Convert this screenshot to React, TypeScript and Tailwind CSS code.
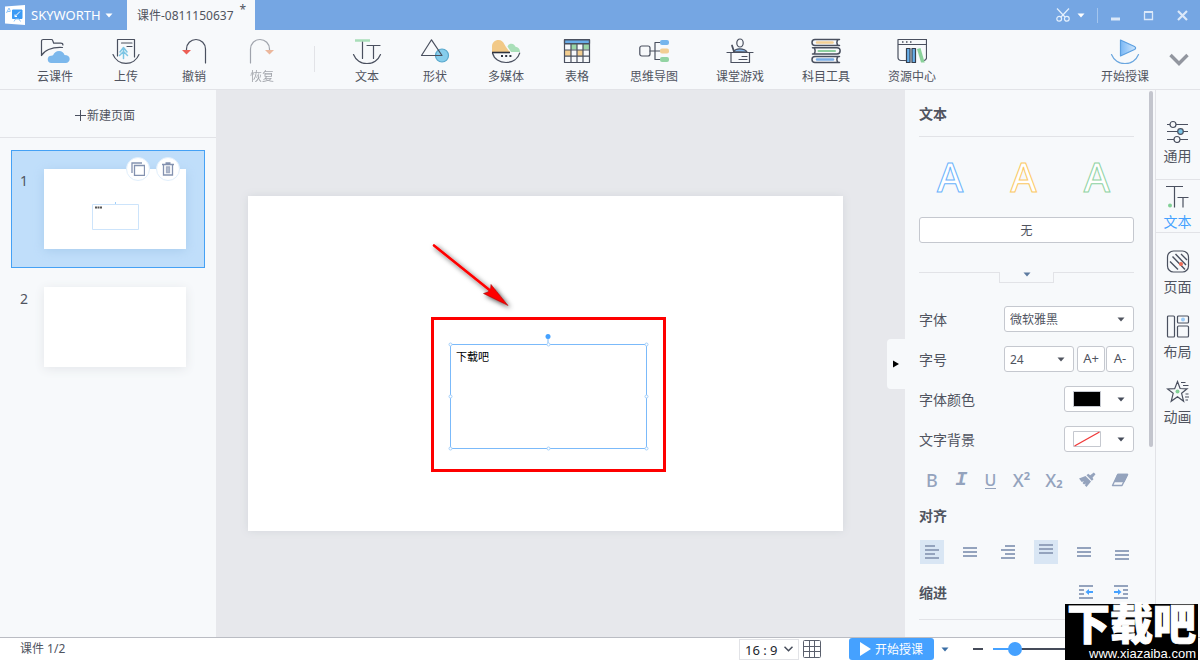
import type { ReactNode } from "react";

const INK = "#4a505f";

function Caret({ className = "text-[#454b59]" }: { className?: string }) {
  return (
    <svg width="8" height="5" viewBox="0 0 8 5" className={`pointer-events-none shrink-0 ${className}`} aria-hidden="true">
      <path d="M0.5 0.500h7L4 4.600z" fill="currentColor" />
    </svg>
  );
}

function ToolIcon({ children }: { children: ReactNode }) {
  return (
    <svg width="30" height="26" viewBox="0 0 30 26" fill="none" stroke={INK} strokeWidth="1.2" strokeLinecap="round" strokeLinejoin="round" aria-hidden="true">
      {children}
    </svg>
  );
}

const cloudIcon = (
  <ToolIcon>
    <path d="M1.500 17.500V3.200c0-1 .7-1.700 1.700-1.700h8.300c.6 0 1 .4 1.200 1l1 2.700h7c1.600 0 2.200.8 2.200 1.800" />
    <path d="M1.500 17.500C4 13 11 8.800 22.500 9.500" />
    <path d="M11.500 25a3.600 3.600 0 0 1-.3-7.200c1-.3 1.600-.4 2-.8.8-2.200 3-4 5.800-4 3 0 5 1.700 5.500 4.100 3 0 5.200 1.600 5.200 4 0 2.400-1.700 3.900-4 3.900z" fill="#7cb8ec" stroke="none" />
  </ToolIcon>
);

const uploadIcon = (
  <ToolIcon>
    <path d="M6.500 18V1.500h17V19" />
    <path d="M2 16.500a14 14 0 0 0 26 0" />
    <path d="M10.500 5h10.500M16 8.500h5" />
    <path d="M12.500 10v10.500M9 14l3.500-4.500L16 14M8.500 17.500l4-4 4 4" stroke="#7cc5e4" strokeWidth="1.500" />
  </ToolIcon>
);

const undoIcon = (
  <ToolIcon>
    <path d="M26.500 25V11a9.500 9.500 0 0 0-19 0v2" />
    <path d="M3 12h9l-4.500 4.500z" fill="#ec5f55" stroke="none" />
  </ToolIcon>
);

const redoIcon = (
  <ToolIcon>
    <path d="M3.500 25V11a9.500 9.500 0 0 1 19 0v2" />
    <path d="M18 12h9l-4.500 4.500z" fill="#e07840" stroke="none" />
  </ToolIcon>
);

const textIcon = (
  <ToolIcon>
    <path d="M3 2.500h15" stroke="#a9deb9" strokeWidth="2.500" strokeLinecap="butt" />
    <path d="M10.500 4v16.500M15 7.500h13M21.500 7.500v13" />
    <path d="M1.500 16.500a14.500 14.500 0 0 0 27 0" />
  </ToolIcon>
);

const shapeIcon = (
  <ToolIcon>
    <circle cx="22" cy="17.500" r="6.500" fill="#86cdec" stroke="#58a8cc" />
    <path d="M11.500 1.800 1.500 17.500h20.500z" />
  </ToolIcon>
);

const mediaIcon = (
  <ToolIcon>
    <path d="M1 14V8.500C1 4.500 4 2 7.500 2c3 0 4.500 1.500 6 4.500 1.500 2.500 3 5 5.500 7.500z" fill="#f2c987" stroke="none" />
    <path d="M16.500 8.500c1-2 2-2.700 4-2.700s3.500 1.500 4 3c2.500.2 4.500 2 4.500 5.200H20z" fill="#a9dfb8" stroke="none" />
    <path d="M1.500 15c1.500 6 7 9.500 13.500 9.500S27 21 28.700 15" />
    <path d="M1 14.500h18" strokeWidth="1.600" stroke="#2f3440" strokeLinecap="butt" />
    <path d="M10 18h2M14.200 18h2M18.400 18h2" strokeWidth="2" strokeLinecap="butt" stroke="#2f3440" />
  </ToolIcon>
);

const tableIcon = (
  <ToolIcon>
    <path d="M2.500 2h25v3.500h-25z" fill="#69ade8" />
    <path d="M9 6h6v5.500H9zM21 6h6v5.500h-6z" fill="#9ad5a6" stroke="none" />
    <path d="M3 12h6v6H3zM15 12h6v6h-6z" fill="#f3ce90" stroke="none" />
    <path d="M2.500 1.500h25v23h-25zM2.500 5.800h25M2.500 12h25M2.500 18.200h25M9 6v18.500M15 6v18.500M21 6v18.500" />
  </ToolIcon>
);

const mindIcon = (
  <ToolIcon>
    <rect x="0.800" y="8" width="10.200" height="10" rx="2" />
    <path d="M11 13h10M21 4.500h-5v17h5" />
    <g stroke="none">
      <rect x="21" y="2" width="9" height="5" rx="2" fill="#76b5ec" />
      <rect x="21" y="10.500" width="9" height="5" rx="2" fill="#f2ce94" />
      <rect x="21" y="19" width="9" height="5" rx="2" fill="#93d4a3" />
    </g>
  </ToolIcon>
);

const gameIcon = (
  <ToolIcon>
    <ellipse cx="15" cy="5" rx="3.200" ry="4" />
    <path d="M8.500 13.500c2-2.500 4-2.700 6-2.700s6 .2 7.500 3.200z" fill="#86b9ec" />
    <path d="M7 7.500 9 13.500" strokeWidth="1.800" />
    <path d="M2 14.500h26M6 15v9.500h18.500V15M17 18.500h5M14 21.500h8" />
  </ToolIcon>
);

const booksIcon = (
  <ToolIcon>
    <path d="M28.500 1.500H4a3 3 0 0 0 0 6h24.500M27 1.500c-1.500 2-1.500 4 0 6M1.500 9.700H26a3 3 0 0 1 0 6.300H1.500M3 9.700c1.500 2.100 1.500 4.200 0 6.300M28.500 18.500H4a3 3 0 0 0 0 6h24.500M27 18.500c-1.500 2-1.500 4 0 6" strokeWidth="1.500" />
    <path d="M6 4.500h15.500" stroke="#f4cf95" strokeWidth="2.500" />
    <path d="M7.500 13h16.500" stroke="#8dd09f" strokeWidth="2" />
    <path d="M6 21.500h16" stroke="#79ade6" strokeWidth="2.500" />
  </ToolIcon>
);

const resourceIcon = (
  <ToolIcon>
    <path d="M8.500 22.500H4a3 3 0 0 1-3-3V1.500h28.500V20a3 3 0 0 1-2.500 2.500M1 6.500h28.500" />
    <path d="M5 4h1.500M9 4h1.500M13 4h1.500" strokeLinecap="butt" strokeWidth="1.500" />
    <path d="M9.500 10.500h3.500v14H9.500zM15 10.500h3.500v14H15z" fill="#67aee9" stroke="#363e4d" />
    <path d="m20 11 3.500-.9 4.200 14.500H24z" fill="#8ad19a" stroke="none" />
  </ToolIcon>
);

const startIcon = (
  <ToolIcon>
    <defs>
      <linearGradient id="play-fill">
        <stop stopColor="#7ab8f5" />
        <stop offset="1" stopColor="#cfe6fc" />
      </linearGradient>
    </defs>
    <path d="M10.500 2v16l14-6.500c1.500-.8 1.500-2.200 0-3z" fill="url(#play-fill)" stroke="#5b9fe0" />
    <path d="M1.500 16.500a14.500 14.500 0 0 0 27 0" stroke="#6aa6df" />
  </ToolIcon>
);

type Tool = { label: string; icon: ReactNode; disabled?: boolean };

const fileTools: Tool[] = [
  { label: "云课件", icon: cloudIcon },
  { label: "上传", icon: uploadIcon },
  { label: "撤销", icon: undoIcon },
  { label: "恢复", icon: redoIcon, disabled: true },
];

const insertTools: Tool[] = [
  { label: "文本", icon: textIcon },
  { label: "形状", icon: shapeIcon },
  { label: "多媒体", icon: mediaIcon },
  { label: "表格", icon: tableIcon },
  { label: "思维导图", icon: mindIcon },
  { label: "课堂游戏", icon: gameIcon },
  { label: "科目工具", icon: booksIcon },
  { label: "资源中心", icon: resourceIcon },
];

function ToolButton({ label, icon, disabled }: Tool) {
  return (
    <button type="button" disabled={disabled} className="flex min-w-[30px] shrink-0 flex-col items-center gap-[5px] disabled:opacity-50">
      {icon}
      <span className="whitespace-nowrap text-xs leading-4">{label}</span>
    </button>
  );
}

function TitleBar() {
  return (
    <header className="flex h-[30px] shrink-0 items-center bg-[#75a6e3] text-white">
      <button type="button" className="flex w-[127px] shrink-0 items-center pl-[5px] text-[13px] leading-5">
        <svg width="20" height="20" viewBox="0 0 20 20" aria-hidden="true">
          <path d="M0 1.500 20 0v20L0 18.500z" fill="#fff" />
          <path d="M7.500 5h9.500v8.500H7.500z" fill="#3d9bf5" stroke="#3d9bf5" strokeLinejoin="round" />
          <path d="m9 16.500 1.500-2.500h3.500l1.500 2.500M1.500 8 4 3l1.500 3.500M2.500 6.500h2.500" fill="none" stroke="#8cc4fb" />
          <path d="m10 11.500 5-5M10 9.500v2h2" fill="none" stroke="#fff" />
        </svg>
        <span className="ml-1.5">SKYWORTH</span>
        <Caret className="ml-1 text-white" />
      </button>
      <div className="flex h-full w-32 shrink-0 items-center bg-[#f7f9fb] pt-px pl-2.5 text-xs text-[#50545f]">
        课件-0811150637
        <sup className="ml-1.5 text-xs">*</sup>
      </div>
      <div className="ml-auto flex items-center pr-3">
        <button type="button" aria-label="截图" className="flex items-center gap-[7px]">
          <svg width="14" height="14" viewBox="0 0 14 14" fill="none" stroke="#e4f0fd" strokeWidth="1.200" aria-hidden="true">
            <path d="M1 .5 9 9M13 .5 5 9" />
            <circle cx="3.200" cy="10.800" r="2.400" />
            <circle cx="10.800" cy="10.800" r="2.400" />
          </svg>
          <Caret className="text-white" />
        </button>
        <span className="ml-3 h-[15px] w-px bg-[#a3c5ee]" />
        <button type="button" aria-label="最小化" className="ml-3">
          <svg width="11" height="11" viewBox="0 0 11 11" aria-hidden="true">
            <path d="M1 7.500h9v3H1z" fill="#dbe8f9" />
          </svg>
        </button>
        <button type="button" aria-label="最大化" className="ml-[22px]">
          <svg width="11" height="11" viewBox="0 0 11 11" aria-hidden="true">
            <path d="M1.500 2v7.500h8V2M1 2h9" fill="none" stroke="#dbe8f9" strokeWidth="1.300" />
            <path d="M1 2h9" stroke="#dbe8f9" strokeWidth="2" />
          </svg>
        </button>
        <button type="button" aria-label="关闭" className="ml-[23px]">
          <svg width="11" height="11" viewBox="0 0 11 11" aria-hidden="true">
            <path d="m1 1 9 9M10 1 1 10" stroke="#dbe8f9" strokeWidth="2.200" />
          </svg>
        </button>
      </div>
    </header>
  );
}

function Toolbar() {
  return (
    <div className="flex h-[60px] shrink-0 items-start border-b border-[#e2e3e7] bg-[#f7f9fb] pt-2 pl-[37px] pr-[11px]">
      <div className="flex gap-[38px]">
        {fileTools.map((tool) => (
          <ToolButton key={tool.label} {...tool} />
        ))}
      </div>
      <span className="mt-2 ml-[37px] h-[26px] w-px shrink-0 bg-[#e2e3e7]" />
      <div className="ml-[37px] flex gap-[38px]">
        {insertTools.map((tool) => (
          <ToolButton key={tool.label} {...tool} />
        ))}
      </div>
      <div className="ml-auto flex gap-5">
        <ToolButton label="开始授课" icon={startIcon} />
        <button type="button" aria-label="收起工具栏" className="mt-[15px] self-start">
          <svg width="20" height="14" viewBox="0 0 20 14" fill="none" stroke="#92969f" strokeWidth="3.400" aria-hidden="true">
            <path d="m1.500 2 8.500 8.500L18.500 2" />
          </svg>
        </button>
      </div>
    </div>
  );
}

function SlideList() {
  return (
    <aside className="flex w-[216px] shrink-0 flex-col bg-[#f7f9fb]">
      <button type="button" className="flex h-12 items-center justify-center border-b border-[#e2e3e7] pt-1 pr-1.5 text-xs">
        <svg width="11" height="11" viewBox="0 0 11 11" className="mr-px" stroke={INK} aria-hidden="true">
          <path d="M0 5.500h11M5.500 0v11" />
        </svg>
        新建页面
      </button>
      <ol className="px-[11px] pt-3 text-sm text-[#50545f]">
        <li className="relative flex h-[118px] border border-[#45a1f5] bg-[#c0defa] pt-[18px] pl-2">
          <span className="w-6 pt-0.5">1</span>
          <div className="relative h-20 w-[142px] bg-white shadow-[0_2px_10px_#a9cdee]">
            <svg width="142" height="80" viewBox="0 0 142 80" fill="none" aria-hidden="true">
              <path d="M48.500 35.500h46v25h-46z" stroke="#cde4fb" />
              <path d="M71 34h1" stroke="#45a1f5" />
              <path d="M51 38.500h7" stroke="#555" strokeWidth="2" strokeDasharray="2 .5" />
            </svg>
          </div>
          <div className="absolute top-1.5 right-6 flex gap-1.5">
            <button type="button" aria-label="复制页面" className="flex size-6 items-center justify-center rounded-full border border-[#e1effc] bg-white">
              <svg width="14" height="14" viewBox="0 0 14 14" fill="none" stroke="#8492b0" aria-hidden="true">
                <path d="M3.500 3.500h10v10h-10z" strokeWidth="1.300" />
                <path d="M1 11V1h10" strokeWidth="1.300" />
              </svg>
            </button>
            <button type="button" aria-label="删除页面" className="flex size-6 items-center justify-center rounded-full border border-[#e1effc] bg-white">
              <svg width="14" height="14" viewBox="0 0 14 14" fill="none" stroke="#8492b0" strokeWidth="1.300" aria-hidden="true">
                <path d="M1 2.500h12M4.500 1h5M2.500 3v10h9V3" />
                <path d="M5.500 5h3v5.500h-3z" fill="#b4bdcf" stroke="#a4aec4" />
              </svg>
            </button>
          </div>
        </li>
        <li className="flex h-[118px] border border-transparent pt-[18px] pl-2">
          <span className="w-6 pt-0.5">2</span>
          <div className="h-20 w-[142px] bg-white shadow-[0_2px_10px_#e4e6ea]" />
        </li>
      </ol>
    </aside>
  );
}

const handles = [
  [3, 12], [101, 12], [199, 12],
  [3, 64], [199, 64],
  [3, 116], [101, 116], [199, 116],
];

function Stage() {
  return (
    <main className="flex min-w-0 flex-1 items-center bg-[#e7e8ec] pl-8">
      <div className="relative aspect-video min-w-0 flex-1 bg-white shadow-[0_0_8px_#d3d7dc]">
        <svg width="100" height="90" viewBox="0 0 100 90" className="absolute top-[34px] left-[174px]" aria-hidden="true">
          <defs>
            <filter id="arrow-shadow" x="-20%" y="-20%" width="150%" height="150%">
              <feDropShadow dx="2" dy="2" stdDeviation="2.500" floodColor="#000" floodOpacity="0.700" />
            </filter>
          </defs>
          <g filter="url(#arrow-shadow)" fill="#fe0000" stroke="#9c1111" strokeWidth="0.600">
            <path d="M68.500 59 69 54.500 86 75.500 61.500 63.500 66 62z" />
            <path d="m12 15.500 55.500 44.500" stroke="#fe0000" strokeWidth="2.600" strokeLinecap="round" />
          </g>
        </svg>
        <div className="absolute top-[121px] left-[183px] h-[155px] w-[235px] border-3 border-[#fe0000]" />
        <textarea
          aria-label="文本框"
          defaultValue="下载吧"
          className="absolute top-[148px] left-[202px] h-[105px] w-[197px] resize-none border border-[#7bbafa] px-[5px] py-1 text-[11px] leading-4 text-black outline-none"
        />
        <svg width="203" height="120" viewBox="0 0 203 120" className="pointer-events-none absolute top-[136px] left-[199px]" fill="#fff" stroke="#a3cffb" aria-hidden="true">
          <path d="M101 5v6" stroke="#7bbafa" />
          <circle cx="101" cy="4.500" r="2.500" fill="#45a1ff" stroke="none" />
          {handles.map(([x, y]) => (
            <circle key={`${x}-${y}`} cx={x + 0.5} cy={y + 0.5} r="1.500" />
          ))}
        </svg>
      </div>
      <button type="button" aria-label="收起面板" className="ml-11 flex h-[50px] w-[18px] shrink-0 items-center justify-center rounded-l bg-[#f7f9fb]">
        <svg width="6" height="8" viewBox="0 0 6 8" aria-hidden="true">
          <path d="M0 .5 6 4 0 7.500z" fill="#000" />
        </svg>
      </button>
    </main>
  );
}

function Dropdown({ id, value, className }: { id: string; value: string; className: string }) {
  return (
    <div className={`relative flex items-center ${className}`}>
      <select id={id} defaultValue={value} className="h-[26px] w-full appearance-none rounded-[3px] border border-[#c5c8cf] bg-white pt-0.5 pl-[5px] text-xs">
        <option>{value}</option>
      </select>
      <Caret className="absolute right-[9px]" />
    </div>
  );
}

function Field({ id, label, children }: { id: string; label: string; children: ReactNode }) {
  return (
    <div className="flex h-[26px] items-center">
      <label htmlFor={id} className="pt-0.5 text-sm">{label}</label>
      <div className="ml-auto flex">{children}</div>
    </div>
  );
}

function ColorButton({ id, children }: { id: string; children: ReactNode }) {
  return (
    <button id={id} type="button" className="flex h-[26px] w-[70px] items-center justify-between rounded-[3px] border border-[#c5c8cf] bg-white px-2">
      {children}
      <Caret />
    </button>
  );
}

const formats: { label: string; icon: ReactNode }[] = [
  { label: "加粗", icon: <span className="text-lg font-medium">B</span> },
  { label: "斜体", icon: <span className="font-['Liberation_Mono',monospace] text-xl leading-6 font-bold italic">I</span> },
  { label: "下划线", icon: <span className="border-b border-[#94a3bd] text-base leading-4 font-medium">U</span> },
  { label: "上标", icon: <span className="flex text-lg leading-6 font-medium">X<span className="text-[11px] leading-4 font-bold">2</span></span> },
  { label: "下标", icon: <span className="flex items-end text-lg leading-6 font-medium">X<span className="text-[11px] leading-4 font-bold">2</span></span> },
  {
    label: "格式刷",
    icon: (
      <svg width="18" height="16" viewBox="0 0 18 16" fill="#94a3bd" aria-hidden="true">
        <path d="M1 6.500 7.500 4l5.500 5.500L8.500 15 6.800 13.200 8 11.500 6 12.500 4.500 11 6 9.300 3.700 10z" />
        <path d="m8.500 3.300 1.700-1.500 2 1.500L15.800.5l1.700 1.700-3 3.500 1 1.500-1.700 1.500z" />
      </svg>
    ),
  },
  {
    label: "清除格式",
    icon: (
      <svg width="18" height="14" viewBox="0 0 18 14" fill="none" stroke="#94a3bd" strokeWidth="1.400" strokeLinejoin="round" aria-hidden="true">
        <path d="M6.800 1.500H16.500L11 12.500H1.500z" />
        <path d="M6.800 1.500H16.500L13 8.500H4z" fill="#94a3bd" />
      </svg>
    ),
  },
];

const aligns = [
  { label: "左对齐", d: "M1 1h10M1 5h14M1 9h10M1 13h14", shift: "items-center", active: true },
  { label: "居中对齐", d: "M1 3h14M1 7h14M1 11h14", shift: "items-center" },
  { label: "右对齐", d: "M5 1h10M1 5h14M5 9h10M1 13h14", shift: "items-center" },
  { label: "顶部对齐", d: "M1 1h14M1 5h14M1 9h14", shift: "items-start pt-1", active: true },
  { label: "垂直居中", d: "M1 3h14M1 7h14M1 11h14", shift: "items-center" },
  { label: "底部对齐", d: "M1 5h14M1 9h14M1 13h14", shift: "items-end pb-1" },
];

const artStyles = [
  { label: "蓝色艺术字", stroke: "[-webkit-text-stroke:1px_#6ab3fb]" },
  { label: "黄色艺术字", stroke: "[-webkit-text-stroke:1px_#fbc964]" },
  { label: "绿色艺术字", stroke: "[-webkit-text-stroke:1px_#8fd3a3]" },
];

function TextPanel() {
  return (
    <section className="flex w-[250px] shrink-0 bg-[#f7f9fb]">
      <div className="ml-3.5 w-[215px]">
        <h2 className="h-[47px] border-b border-[#e2e3e7] pt-3.5 text-sm leading-5 font-bold">文本</h2>
        <div className="flex justify-between pt-5 pr-6 pl-[18px]">
          {artStyles.map(({ label, stroke }) => (
            <button key={label} type="button" aria-label={label} className={`text-[40px] leading-10 font-medium text-white ${stroke}`}>
              A
            </button>
          ))}
        </div>
        <button type="button" className="mt-5 h-[26px] w-full rounded-[3px] border border-[#c5c8cf] bg-white pt-0.5 text-xs">无</button>
        <div className="mt-[29px] flex items-start">
          <span className="h-px flex-1 bg-[#e2e3e7]" />
          <button type="button" aria-label="展开更多样式" className="flex h-[11px] w-[55px] justify-center border-x border-b border-[#e2e3e7]">
            <Caret className="text-[#5d7ba0]" />
          </button>
          <span className="h-px flex-1 bg-[#e2e3e7]" />
        </div>
        <div className="mt-[23px] flex flex-col gap-3.5">
          <Field id="font-family" label="字体">
            <Dropdown id="font-family" value="微软雅黑" className="w-[130px]" />
          </Field>
          <Field id="font-size" label="字号">
            <Dropdown id="font-size" value="24" className="mr-[3px] w-[70px]" />
            <button type="button" className="h-[26px] w-7 rounded-[3px] border border-[#c5c8cf] bg-white text-[13px]">A+</button>
            <button type="button" className="ml-px h-[26px] w-7 rounded-[3px] border border-[#c5c8cf] bg-white text-[13px]">A-</button>
          </Field>
          <Field id="font-color" label="字体颜色">
            <ColorButton id="font-color">
              <span className="h-4 w-7 border border-[#c5c8cf] bg-black" />
            </ColorButton>
          </Field>
          <Field id="text-background" label="文字背景">
            <ColorButton id="text-background">
              <svg width="28" height="16" viewBox="0 0 28 16" aria-hidden="true">
                <path d="M.5.500h27v15H.5z" fill="#fff" stroke="#c5c8cf" />
                <path d="m1.500 15 25-14" stroke="#f03a3a" strokeWidth="1.400" />
              </svg>
            </ColorButton>
          </Field>
        </div>
        <div className="mt-4 flex h-6 items-center justify-between pr-[5px] pl-1.5 text-[#94a3bd]">
          {formats.map(({ label, icon }) => (
            <button key={label} type="button" aria-label={label} className="flex h-6 min-w-3.5 items-center justify-center leading-6">
              {icon}
            </button>
          ))}
        </div>
        <h3 className="mt-3.5 text-sm leading-5 font-bold">对齐</h3>
        <div className="mt-3.5 flex gap-3.5 pl-px">
          {aligns.map(({ label, d, shift, active }) => (
            <button key={label} type="button" aria-label={label} className={`flex size-6 justify-center ${shift} ${active ? "bg-[#d9e6f4]" : ""}`}>
              <svg width="16" height="14" viewBox="0 0 16 14" stroke="#94a3bd" strokeWidth="2" aria-hidden="true">
                <path d={d} />
              </svg>
            </button>
          ))}
        </div>
        <div className="mt-[15px] flex h-[41px] items-start border-b border-[#e2e3e7] pt-1">
          <h3 className="text-sm leading-5 font-bold">缩进</h3>
          <button type="button" aria-label="减少缩进" className="mt-0.5 ml-auto">
            <svg width="14" height="14" viewBox="0 0 14 14" stroke="#94a3bd" strokeWidth="2" aria-hidden="true">
              <path d="M0 1h14M0 5h5M0 9h5M0 13h14" />
              <path d="M14 7H9" stroke="#45a1ff" />
              <path d="M6.500 7 10 4v6z" fill="#45a1ff" stroke="none" />
            </svg>
          </button>
          <button type="button" aria-label="增加缩进" className="mt-0.5 mr-1.5 ml-[21px]">
            <svg width="14" height="14" viewBox="0 0 14 14" stroke="#94a3bd" strokeWidth="2" aria-hidden="true">
              <path d="M0 1h14M9 5h5M9 9h5M0 13h14" />
              <path d="M0 7h5" stroke="#45a1ff" />
              <path d="M7.500 7 4 4v6z" fill="#45a1ff" stroke="none" />
            </svg>
          </button>
        </div>
      </div>
      <span className="mt-px ml-[15px] h-[356px] w-1 rounded-full bg-[#c3c5cd]" />
    </section>
  );
}

function TabIcon({ children }: { children: ReactNode }) {
  return (
    <svg width="24" height="24" viewBox="0 0 24 24" fill="none" stroke={INK} strokeWidth="1.200" aria-hidden="true">
      {children}
    </svg>
  );
}

function SideTabs() {
  const tab = "flex flex-col items-center gap-[3px] pr-px text-sm leading-5";
  return (
    <nav className="flex w-[45px] shrink-0 flex-col border-l border-[#e2e3e7] bg-[#f7f9fb]">
      <button type="button" className={`${tab} border-b border-[#e2e3e7] pt-[29px] pb-[13px]`}>
        <TabIcon>
          <path d="M1 5.500h21M1 12.500h21M1 20.500h21" />
          <circle cx="7" cy="5.500" r="3" fill="#f7f9fb" />
          <circle cx="14.500" cy="12.500" r="2.800" fill="#7cc6e8" />
          <circle cx="11" cy="20.500" r="3" fill="#f7f9fb" />
        </TabIcon>
        通用
      </button>
      <button type="button" className={`${tab} border-b border-[#e2e3e7] pt-[5px] text-[#45a1ff]`}>
        <TabIcon>
          <path d="M0 1.500h17M8.500 1.500v21M11.500 12.500h11M17 12.500v10" />
          <circle cx="4" cy="20.500" r="2" fill="#82d096" stroke="none" />
        </TabIcon>
        文本
      </button>
      <button type="button" className={`${tab} pt-[17px]`}>
        <TabIcon>
          <rect x="1.500" y="1" width="21" height="21" rx="6" />
          <path d="M4 11.500 12 19.500M6.500 6.500l12.500 13M9.500 4l10.500 11M15 4l6 6" strokeWidth="1.400" />
          <circle cx="15" cy="14" r="2" fill="#ed6a55" stroke="none" />
        </TabIcon>
        页面
      </button>
      <button type="button" className={`${tab} pt-[18px]`}>
        <TabIcon>
          <rect x="1.500" y="1" width="7" height="21" rx="1" />
          <rect x="11.500" y="1" width="11" height="7" rx="1" />
          <rect x="11.500" y="11" width="11" height="11" rx="1" />
          <circle cx="17" cy="4.500" r="2" fill="#9ccbf7" stroke="none" />
        </TabIcon>
        布局
      </button>
      <button type="button" className={`${tab} pt-[18px]`}>
        <TabIcon>
          <path d="m11.500 1.500 2.600 7 7 .3-5.500 4.500 2 8-6.100-4.500-6.300 4.500 2-8L1.500 9l7.200-.4zM15 2.500h4.500M17 5.500h5.500M19.500 14h3M19 17h4M19.500 20H22" />
          <circle cx="11.500" cy="11.500" r="2" fill="#82d096" stroke="none" />
        </TabIcon>
        动画
      </button>
    </nav>
  );
}

function StatusBar() {
  return (
    <footer className="flex h-[23px] shrink-0 items-center border-t border-[#babcc3] bg-white pr-[87px] pl-5 text-xs">
      <span>课件 1/2</span>
      <div className="relative ml-auto flex items-center">
        <select aria-label="页面比例" defaultValue="16 : 9" className="h-[21px] w-[60px] appearance-none border border-[#e2e3e7] pl-[5px] text-[13px] leading-5 text-[#22252d]">
          <option>16 : 9</option>
        </select>
        <svg width="9" height="6" viewBox="0 0 9 6" className="pointer-events-none absolute right-1.5" fill="none" stroke="#454b59" strokeWidth="1.500" aria-hidden="true">
          <path d="m.5.800 4 4 4-4" />
        </svg>
      </div>
      <button type="button" aria-label="显示网格" className="ml-1">
        <svg width="18" height="18" viewBox="0 0 18 18" fill="none" stroke="#5b606d" aria-hidden="true">
          <rect x="0.500" y="0.500" width="17" height="17" rx="1" />
          <path d="M6.500.500v17M11.500.500v17M.5 6.500h17M.5 11.500h17" />
        </svg>
      </button>
      <button type="button" className="ml-7 flex h-[22px] w-[85px] shrink-0 items-center justify-center gap-1 rounded-[3px] bg-[#45a1ff] text-white">
        <svg width="11" height="14" viewBox="0 0 11 14" aria-hidden="true">
          <path d="M0 0 11 7 0 14z" fill="#fff" />
        </svg>
        <span className="whitespace-nowrap pt-0.5">开始授课</span>
      </button>
      <button type="button" aria-label="授课选项" className="ml-[7px]">
        <Caret className="text-[#3a6ea5]" />
      </button>
      <button type="button" aria-label="缩小" className="ml-6 h-0.5 w-2.5 bg-[#454b59]" />
      <input
        type="range"
        aria-label="缩放"
        defaultValue={14}
        className="ml-2.5 h-0.5 w-[120px] appearance-none bg-[linear-gradient(90deg,#45a1ff_22px,#454b59_22px)] [&::-webkit-slider-thumb]:size-3.5 [&::-webkit-slider-thumb]:appearance-none [&::-webkit-slider-thumb]:rounded-full [&::-webkit-slider-thumb]:bg-[#45a1ff]"
      />
    </footer>
  );
}

export default function App() {
  return (
    <div className="relative flex h-screen min-h-[640px] flex-col overflow-hidden bg-[#f7f9fb] font-['Noto_Sans','Noto_Sans_CJK_SC',sans-serif] text-[#50545f]">
      <TitleBar />
      <Toolbar />
      <div className="flex min-h-0 flex-1">
        <SlideList />
        <Stage />
        <TextPanel />
        <SideTabs />
      </div>
      <StatusBar />
      <div className="absolute right-0.5 bottom-0 flex h-14 w-[133px] flex-col items-center justify-between bg-black font-['Liberation_Sans','Noto_Sans_CJK_SC',sans-serif] text-white">
        <span className="text-[43px] leading-[43px] font-black whitespace-nowrap [-webkit-text-stroke:1px_#fff]">下载吧</span>
        <span className="self-end pr-0.5 text-[13px] leading-[13px]">www.xiazaiba.com</span>
      </div>
    </div>
  );
}
